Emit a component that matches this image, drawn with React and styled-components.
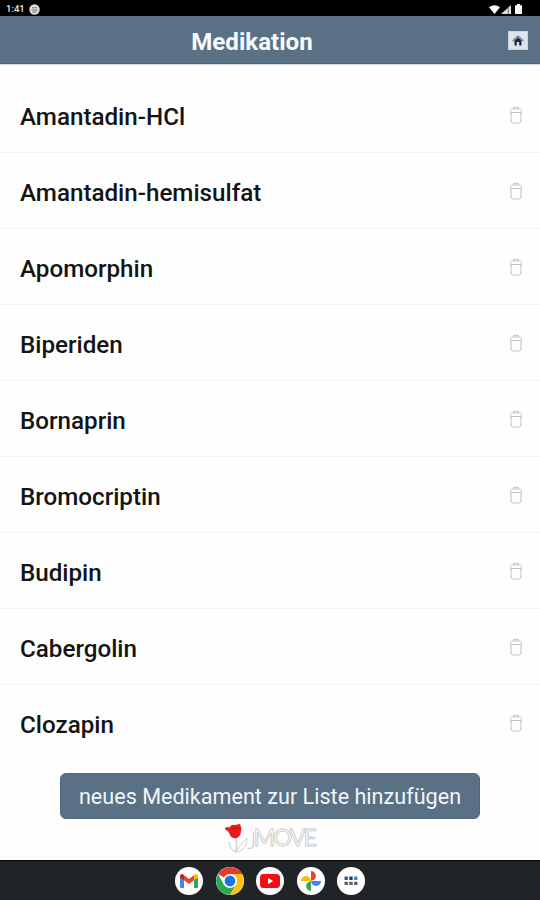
import styled, { createGlobalStyle } from "styled-components";

const GlobalStyle = createGlobalStyle`
  * {
    box-sizing: border-box;
  }

  body {
    margin: 0;
    background-color: #fff;
    font-family: Roboto, sans-serif;
  }
`;

const Screen = styled.div`
  width: 540px;
  height: 900px;
  display: flex;
  flex-direction: column;
  overflow: hidden;
  background-color: #fefefe;
`;

const StatusBar = styled.div`
  height: 16px;
  padding: 2px 16px 0 6px;
  display: flex;
  align-items: center;
  justify-content: space-between;
  background-color: #000;
  color: #e8e8e8;
  font-size: 9.5px;
  font-weight: 500;
  line-height: 14px;
`;

const StatusGroup = styled.div`
  display: flex;
  align-items: center;
  gap: ${(props) => props.$gap}px;

  svg {
    display: block;
  }
`;

const Header = styled.header`
  height: 48px;
  padding: 0 12px 0 0;
  display: flex;
  align-items: center;
  justify-content: space-between;
  background-color: #5a7085;
  border-bottom: 1px solid #4c6379;
  box-shadow: 0 1px 1px #d5dade;
`;

const Title = styled.h1`
  margin: 0;
  padding-top: 4px;
  width: 504px;
  text-align: center;
  color: #f6fafd;
  font-size: 24.1px;
  font-weight: 700;
  line-height: 28px;
`;

const HomeButton = styled.button`
  width: 20px;
  height: 19px;
  margin-top: 2px;
  padding: 0;
  border: 1px solid #cbd5df;
  background-color: #dce4ec;
  display: flex;
  align-items: center;
  justify-content: center;
`;

const List = styled.ul`
  margin: 0;
  padding: 13px 0 0;
  list-style: none;
`;

const Row = styled.li`
  height: 76px;
  padding: 5px 16px 0 20px;
  display: flex;
  align-items: center;
  justify-content: space-between;
  border-bottom: 1px solid ${(props) => (props.$last ? "transparent" : "#f3f3f3")};
`;

const Name = styled.span`
  color: #141414;
  font-size: 24.2px;
  font-weight: 500;
  line-height: 30px;
`;

const DeleteButton = styled.button`
  width: 16px;
  height: 20px;
  margin-top: -5px;
  padding: 0;
  border: 0;
  background: none;

  svg {
    display: block;
  }
`;

const Footer = styled.div`
  flex: 1;
  padding-top: 12px;
  display: flex;
  flex-direction: column;
  align-items: center;
`;

const AddButton = styled.button`
  width: 420px;
  height: 46px;
  padding: 2px 0 0;
  border: 1px solid #4f667d;
  border-radius: 6px;
  background-color: #5a7085;
  color: #f0f6fa;
  font-family: inherit;
  font-size: 21.6px;
  line-height: 28px;
  white-space: nowrap;
`;

const Logo = styled.div`
  height: 34px;
  margin-top: 3px;
  padding-right: 1px;
  display: flex;
  align-items: flex-start;

  svg {
    display: block;
  }
`;

const LogoText = styled.span`
  width: 64px;
  color: #fff;
  font-family: Lato, sans-serif;
  font-size: 23.5px;
  letter-spacing: -2px;
  line-height: 31px;
  white-space: nowrap;
  -webkit-text-stroke: 0.9px #cacaca;
`;

const NavBar = styled.nav`
  height: 40px;
  border-top: 1px solid #050607;
  display: flex;
  align-items: center;
  justify-content: center;
  gap: 12.5px;
  background-color: #202427;
`;

const AppIcon = styled.div`
  width: 28px;
  height: 28px;
  border-radius: 50%;
  overflow: hidden;
  display: flex;
  align-items: center;
  justify-content: center;
  background-color: #fff;
`;

const medications = [
  "Amantadin-HCl",
  "Amantadin-hemisulfat",
  "Apomorphin",
  "Biperiden",
  "Bornaprin",
  "Bromocriptin",
  "Budipin",
  "Cabergolin",
  "Clozapin",
];

const TrashIcon = () => (
  <svg width="16" height="20" viewBox="0 0 16 20" fill="none" stroke="#c2c2c2">
    <path d="M5.5 3.5V2.300h5v1.200" />
    <path d="M2.500 7.500V5.800Q2.500 4 4.500 4h7q2 0 2 1.800v1.700z" />
    <path d="M3 7.500V16q0 2 2 2h6q2 0 2-2V7.500" />
  </svg>
);

const GmailIcon = () => (
  <svg width="18" height="14" viewBox="0 0 18 14">
    <path d="M0 2v10.5Q0 14 1.4 14H4V5z" fill="#4285f4" />
    <path d="M14 5v9h2.6q1.4 0 1.4-1.5V2z" fill="#34a853" />
    <path d="M4 1.2 9 5l5-3.800V6.300L9 10 4 6.300z" fill="#ea4335" />
    <path d="M0 2.200Q0 0 2 0q.8 0 2 1.200v5.100L0 3.400z" fill="#c5221f" />
    <path d="M18 2.200Q18 0 16 0q-.8 0-2 1.200v5.100l4-2.900z" fill="#fbbc04" />
  </svg>
);

const ChromeIcon = () => (
  <svg width="28" height="28" viewBox="0 0 28 28">
    <path d="M14 7h12.120L24 4 14 0z" fill="#e33b2e" />
    <path d="M14 14 1.880 7A14 14 0 0 1 26.120 7z" fill="#e33b2e" />
    <path d="M1.880 7A14 14 0 0 0 14 28l6.060-10.500L14 14 7.940 17.500z" fill="#2da94f" />
    <path d="M14 7h12.120A14 14 0 0 1 14 28l6.060-10.500z" fill="#fbc116" />
    <circle cx="14" cy="14" r="7" fill="#fff" />
    <circle cx="14" cy="14" r="5.400" fill="#1a73e8" />
  </svg>
);

const YoutubeIcon = () => (
  <svg width="20" height="14" viewBox="0 0 20 14">
    <rect width="20" height="14" rx="3.5" fill="#f80b12" />
    <path d="M8 4v6l5.200-3z" fill="#fff" />
  </svg>
);

const PhotosIcon = () => (
  <svg width="20" height="20" viewBox="0 0 20 20">
    <path d="M10 0A4.900 4.900 0 0 1 10 9.800z" fill="#ea4335" />
    <path d="M20 10A4.900 4.900 0 0 1 10.200 10z" fill="#4285f4" />
    <path d="M10 20A4.900 4.900 0 0 1 10 10.200z" fill="#34a853" />
    <path d="M0 10A4.900 4.900 0 0 1 9.800 10z" fill="#fbbc04" />
  </svg>
);

const AppsIcon = () => (
  <svg width="14" height="10" viewBox="0 0 14 10">
    <rect x="0.500" y="0.500" width="3.400" height="3.400" rx="0.600" fill="#2c5c86" />
    <rect x="5.300" y="0.500" width="3.400" height="3.400" rx="0.600" fill="#173e66" />
    <rect x="10.100" y="0.500" width="3.400" height="3.400" rx="0.600" fill="#4380b8" />
    <rect x="0.500" y="5.700" width="3.400" height="3.400" rx="0.600" fill="#59636e" />
    <rect x="5.300" y="5.700" width="3.400" height="3.400" rx="0.600" fill="#59636e" />
    <rect x="10.100" y="5.700" width="3.400" height="3.400" rx="0.600" fill="#59636e" />
  </svg>
);

const MoveLogo = () => (
  <Logo>
    <svg width="32" height="34" viewBox="0 0 32 34">
      {/* stem and leaves */}
      <path d="M14 15q1 7 0 15" fill="none" stroke="#cfcfcf" strokeWidth="1.500" />
      <path
        d="M7 20q1 8 7 10 2-3 4-6t7-8q0 8-5 12-3 2-6 2-6-2-7-10z"
        fill="#fff"
        stroke="#d2d2d2"
      />
      {/* blossom */}
      <path
        d="M2.500 7q2-3 5-1.500Q9 2 13 3l5-1q2 4 1 7 0 5-4 7-5 1-7-3-1-4-5.500-6z"
        fill="#e81c1c"
      />
      <path d="M9 5.500q3 2 8 .5" fill="none" stroke="#a01515" strokeWidth="0.800" />
      <path d="M31.500 10v12q-1 6-6 4" fill="none" stroke="#cccccc" strokeWidth="1.300" />
    </svg>
    <LogoText>MOVE</LogoText>
  </Logo>
);

const App = () => {
  return (
    <>
      <GlobalStyle />
      <Screen>
        <StatusBar>
          <StatusGroup $gap={4}>
            <span>1:41</span>
            <svg width="11" height="11" viewBox="0 0 11 11">
              <circle cx="5.500" cy="5.500" r="5.200" fill="#dedede" />
              <path d="M3 3.800h5M2.500 6h6M3.500 8h4" stroke="#666" strokeWidth="0.900" />
            </svg>
          </StatusGroup>
          <StatusGroup $gap={1}>
            <svg width="11" height="9" viewBox="0 0 11 9">
              <path d="M0 2.300Q5.500-2 11 2.300L5.500 9z" fill="#fff" />
            </svg>
            <svg width="10" height="9" viewBox="0 0 10 9">
              <path d="M10 0v9H0z" fill="#ddd" />
              <path d="M7.300 3v6" stroke="#555" strokeWidth="0.800" />
            </svg>
            <svg width="12" height="10" viewBox="0 0 12 10">
              <path d="M3 1.200h2V0h3v1.200H10V10H3z" fill="#fff" />
            </svg>
          </StatusGroup>
        </StatusBar>

        <Header>
          <Title>Medikation</Title>
          <HomeButton aria-label="Home">
            <svg width="12" height="11" viewBox="0 0 12 11">
              <path d="M2.500 5.500 6 2.500l3.500 3V10.500h-2.300V7H4.800v3.500H2.500z" fill="#1d2447" />
              <path d="M.7 6 6 1.200 11.300 6" fill="none" stroke="#6d7585" strokeWidth="1.400" />
            </svg>
          </HomeButton>
        </Header>

        <List>
          {medications.map((name, i) => (
            <Row key={name} $last={i === medications.length - 1}>
              <Name>{name}</Name>
              <DeleteButton aria-label={`${name} löschen`}>
                <TrashIcon />
              </DeleteButton>
            </Row>
          ))}
        </List>

        <Footer>
          <AddButton>neues Medikament zur Liste hinzufügen</AddButton>
          <MoveLogo />
        </Footer>

        <NavBar>
          <AppIcon><GmailIcon /></AppIcon>
          <AppIcon><ChromeIcon /></AppIcon>
          <AppIcon><YoutubeIcon /></AppIcon>
          <AppIcon><PhotosIcon /></AppIcon>
          <AppIcon><AppsIcon /></AppIcon>
        </NavBar>
      </Screen>
    </>
  );
};

export default App;
